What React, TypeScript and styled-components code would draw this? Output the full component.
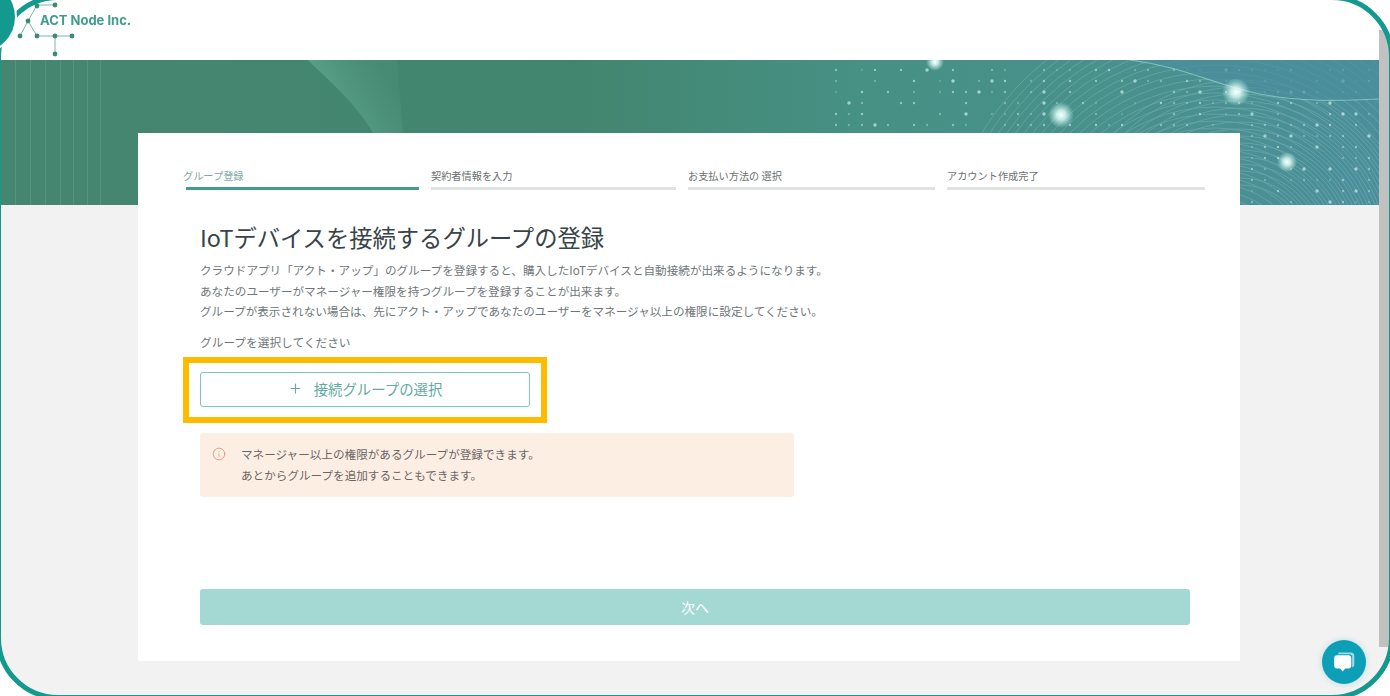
import React from "react";
import styled, { createGlobalStyle } from "styled-components";
import { Info, Plus } from "lucide-react";

const GlobalStyle = createGlobalStyle`
  html, body {
    margin: 0;
    height: 100%;
    overflow: hidden;
    background: #fff;
    font-family: "Noto Sans CJK JP", "Liberation Sans", sans-serif;
  }
`;

const Screen = styled.div`
  position: relative;
  display: flex;
  width: 1390px;
  height: 696px;
  overflow: hidden;
  background: #f2f2f2;
`;

const Main = styled.main`
  display: flex;
  flex-direction: column;
  width: 1379px;
  filter: blur(0.5px);
`;

const ScrollTrack = styled.div`
  flex: 1;
  display: flex;
  flex-direction: column;
  padding-top: 30px;
  background: #f2f2f2;
`;

const ScrollThumb = styled.div`
  height: 617px;
  background: #c1c1c1;
`;

const Header = styled.header`
  display: flex;
  align-items: flex-start;
  height: 60px;
  background: #fff;
`;

const LogoMark = styled.svg`
  display: block;
  width: 80px;
  height: 60px;
  flex: none;
`;

const LogoText = styled.span`
  margin: 13px 0 0 -40px;
  font-family: "Inter", "Liberation Sans", sans-serif;
  font-size: 13px;
  line-height: 15px;
  font-weight: 700;
  color: #3f9c90;
`;

const Hero = styled.div`
  height: 145px;
  line-height: 0;
`;

const Card = styled.section`
  position: relative;
  display: flex;
  flex-direction: column;
  box-sizing: border-box;
  width: 1102px;
  height: 528px;
  margin: -72px 0 0 138px;
  padding: 36px 50px 36px 62px;
  background: #fff;
`;

const Steps = styled.ol`
  display: grid;
  grid-template-columns: 233px 245px 247px 258px;
  column-gap: 12px;
  margin: 0 0 0 -14px;
  padding: 0;
  list-style: none;
`;

const Step = styled.li<{ $active?: boolean }>`
  padding-bottom: 4px;
  border-bottom: 3px solid ${(p) => (p.$active ? "#3f9d90" : "#e1e3e3")};
  font-size: 10.2px;
  line-height: 14px;
  white-space: nowrap;
  color: ${(p) => (p.$active ? "#7fa9a5" : "#6b6f70")};
`;

const StepLabel = styled.span<{ $shift?: boolean }>`
  display: block;
  margin-left: ${(p) => (p.$shift ? "-3px" : "0")};
`;

const Title = styled.h1`
  margin: 30px 0 0;
  font-size: 23.3px;
  line-height: 34px;
  font-weight: 400;
  color: #38434a;
`;

const Description = styled.p`
  margin: 6px 0 0;
  font-size: 11.6px;
  line-height: 20.5px;
  white-space: nowrap;
  color: #6f7679;
`;

const FieldLabel = styled.div`
  margin-top: 10px;
  font-size: 11.7px;
  line-height: 20px;
  color: #6f7679;
`;

const Highlight = styled.div`
  align-self: flex-start;
  margin: 5px 0 0 -17px;
  padding: 9px 11px 10px;
  border: 6px solid #ffbb00;
`;

const SelectButton = styled.button`
  display: flex;
  align-items: center;
  justify-content: center;
  gap: 11px;
  box-sizing: border-box;
  width: 330px;
  height: 35px;
  padding: 0 0 2px;
  border: 1px solid #80c6c0;
  border-radius: 3px;
  background: #fff;
  font-family: inherit;
  font-size: 14.4px;
  color: #61aaa5;
`;

const Note = styled.div`
  display: flex;
  gap: 15px;
  box-sizing: border-box;
  width: 594px;
  height: 64px;
  margin-top: 10px;
  padding: 11px 12px;
  border-radius: 3px;
  background: #fdeee4;
  font-size: 11.6px;
  line-height: 21px;
  color: #6b6663;
`;

const NoteIcon = styled(Info)`
  flex: none;
  margin-top: 3px;
  color: #d9967a;
`;

const NextButton = styled.button`
  flex: none;
  width: 990px;
  height: 36px;
  margin-top: auto;
  border: 0;
  border-radius: 3px;
  background: #a3d8d3;
  font-family: inherit;
  font-size: 14px;
  color: #fff;
`;

const Frame = styled.div`
  position: absolute;
  inset: -5px -4px -4px -4px;
  border: 5px solid #14998f;
  border-radius: 62px;
  box-shadow: 0 0 0 70px #fff;
  pointer-events: none;
`;

const CornerDot = styled.div`
  position: absolute;
  left: -55px;
  top: -18px;
  width: 70px;
  height: 70px;
  border-radius: 50%;
  background: #14998f;
  box-shadow: 0 0 0 2px #fff;
`;

const ChatButton = styled.button`
  position: absolute;
  left: 1322px;
  top: 640px;
  display: flex;
  align-items: center;
  justify-content: center;
  width: 44px;
  height: 44px;
  padding: 0;
  border: 0;
  border-radius: 50%;
  background: #0e9fb8;
  box-shadow: 0 0 6px rgba(14, 159, 184, 0.25);
`;

const nodes = [
  [55, 5],
  [37, 6],
  [28, 21],
  [20, 36],
  [37, 36],
  [55, 36],
  [72, 36],
  [55, 54],
];

const Logo = () => (
  <LogoMark viewBox="0 0 80 60">
    <path
      d="M55 5H37L28 21L20 36M28 21L37 36H72M55 36V54"
      fill="none"
      stroke="#7fb5a8"
      strokeWidth="1"
    />
    {nodes.map(([x, y]) => (
      <circle key={`${x}-${y}`} cx={x} cy={y} r="2.4" fill="#3b8a78" />
    ))}
  </LogoMark>
);

// small repeatable noise so the dot field stays the same on every render
const noise = (a: number, b: number) => {
  const v = Math.sin(a * 12.9898 + b * 78.233) * 43758.5453;
  return v - Math.floor(v);
};

const dots: { x: number; y: number; r: number; o: number }[] = [];
for (let row = 0; row < 13; row++) {
  const y = 10 + row * 11;
  for (let col = 0; col < 42; col++) {
    const x = 836 + col * 13;
    if (row > 5 && x < 1240) continue;
    const n = noise(row + 1, col + 1);
    if (n < 0.4) continue;
    dots.push({ x, y, r: n > 0.92 ? 1.7 : 1.2, o: 0.18 + (n - 0.4) * 0.8 });
  }
}

const glows = [
  [935, 2, 9],
  [1061, 55, 13],
  [1236, 32, 14],
  [1287, 102, 10],
];

const arcs = Array.from({ length: 30 }, (_, i) => 70 + i * 7);
const leftLines = [15, 30, 45, 60, 73, 87, 100];

const HeroArt = () => (
  <svg width="1379" height="145" viewBox="0 0 1379 145">
    <defs>
      <linearGradient id="heroBase" x1="0" y1="0" x2="1" y2="0">
        <stop offset="0" stopColor="#44866f" />
        <stop offset="0.42" stopColor="#43866f" />
        <stop offset="0.62" stopColor="#469084" />
        <stop offset="0.8" stopColor="#48918c" />
        <stop offset="1" stopColor="#4b8f9b" />
      </linearGradient>
      <linearGradient id="heroCone" x1="0" y1="1" x2="1" y2="0.55">
        <stop offset="0" stopColor="#a5e6d0" stopOpacity="0.75" />
        <stop offset="0.3" stopColor="#74bda5" stopOpacity="0.5" />
        <stop offset="1" stopColor="#5aa48e" stopOpacity="0.15" />
      </linearGradient>
      <radialGradient id="heroGlow">
        <stop offset="0" stopColor="#fff" />
        <stop offset="0.35" stopColor="#dcfbf4" stopOpacity="0.85" />
        <stop offset="1" stopColor="#bff5ea" stopOpacity="0" />
      </radialGradient>
    </defs>
    <rect width="1379" height="145" fill="url(#heroBase)" />
    {leftLines.map((x) => (
      <rect key={x} x={x} width="1" height="145" fill="#fff" opacity="0.1" />
    ))}
    <path d="M308 0H397L403 73H373C355 42 332 24 308 0Z" fill="url(#heroCone)" />
    <g fill="none" stroke="#fff" strokeWidth="0.8" opacity="0.18">
      {arcs.map((r) => (
        <circle key={`a${r}`} cx="1215" cy="215" r={r} />
      ))}
      {arcs.slice(0, 16).map((r) => (
        <circle key={`b${r}`} cx="1240" cy="195" r={r} />
      ))}
    </g>
    {dots.map((d) => (
      <circle key={`${d.x}-${d.y}`} cx={d.x} cy={d.y} r={d.r} fill="#d8fbf3" opacity={d.o} />
    ))}
    <path
      d="M1130 0C1190 8 1210 24 1260 34C1300 42 1340 41 1379 39V0Z"
      fill="#4a8d9c"
      opacity="0.7"
    />
    <path
      d="M1130 0C1190 8 1210 24 1260 34C1300 42 1340 41 1379 39"
      fill="none"
      stroke="#9fe0da"
      strokeWidth="1.2"
      opacity="0.6"
    />
    {glows.map(([x, y, r]) => (
      <circle key={x} cx={x} cy={y} r={r} fill="url(#heroGlow)" />
    ))}
  </svg>
);

const ChatIcon = () => (
  <svg width="26" height="24" viewBox="0 0 30 28">
    <path
      d="M10 3H23C25.5 3 27 4.5 27 7V17C27 19 26 20 24.5 20.5V8C24.5 6 23.5 5 21.5 5H8C8 3.8 8.8 3 10 3Z"
      fill="#9fdce6"
    />
    <path
      d="M7 6H20C22.2 6 23.5 7.3 23.5 9.5V18C23.5 20.2 22.2 21.5 20 21.5H16.5L13.5 25L10.5 21.5H7C4.8 21.5 3.5 20.2 3.5 18V9.5C3.5 7.3 4.8 6 7 6Z"
      fill="#fff"
    />
  </svg>
);

const App: React.FC = () => {
  return (
    <Screen>
      <GlobalStyle />
      <Main>
        <Header>
          <Logo />
          <LogoText>ACT Node Inc.</LogoText>
        </Header>
        <Hero>
          <HeroArt />
        </Hero>
        <Card>
          <Steps>
            <Step $active>
              <StepLabel $shift>グループ登録</StepLabel>
            </Step>
            <Step>
              <StepLabel>契約者情報を入力</StepLabel>
            </Step>
            <Step>
              <StepLabel>お支払い方法の 選択</StepLabel>
            </Step>
            <Step>
              <StepLabel>アカウント作成完了</StepLabel>
            </Step>
          </Steps>
          <Title>IoTデバイスを接続するグループの登録</Title>
          <Description>
            クラウドアプリ「アクト・アップ」のグループを登録すると、購入したIoTデバイスと自動接続が出来るようになります。
            <br />
            あなたのユーザーがマネージャー権限を持つグループを登録することが出来ます。
            <br />
            グループが表示されない場合は、先にアクト・アップであなたのユーザーをマネージャ以上の権限に設定してください。
          </Description>
          <FieldLabel>グループを選択してください</FieldLabel>
          <Highlight>
            <SelectButton>
              <Plus size={15} strokeWidth={1.8} />
              接続グループの選択
            </SelectButton>
          </Highlight>
          <Note>
            <NoteIcon size={14} strokeWidth={1.4} />
            <div>
              マネージャー以上の権限があるグループが登録できます。
              <br />
              あとからグループを追加することもできます。
            </div>
          </Note>
          <NextButton>次へ</NextButton>
        </Card>
      </Main>
      <ScrollTrack>
        <ScrollThumb />
      </ScrollTrack>
      <ChatButton aria-label="チャット">
        <ChatIcon />
      </ChatButton>
      <Frame />
      <CornerDot />
    </Screen>
  );
};

export default App;
